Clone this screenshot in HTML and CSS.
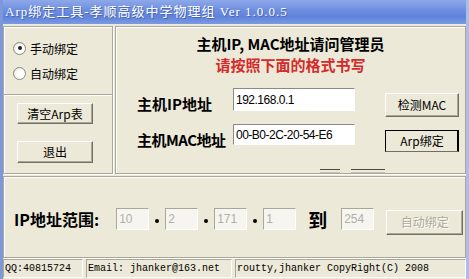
FILE: index.html
```html
<!DOCTYPE html>
<html lang="zh-CN">

<head>
    <meta charset="UTF-8">
    <title>Arp绑定工具</title>
    <link rel="stylesheet" href="styles.css">
</head>

<body>
    <div class="window">
        <div class="titlebar">Arp绑定工具-孝顺高级中学物理组 Ver 1.0.0.5</div>
        <div class="client">
            <div class="top">
                <div class="side">
                    <div class="radios">
                        <label class="radio"><span class="dot checked"></span>手动绑定</label>
                        <label class="radio"><span class="dot"></span>自动绑定</label>
                    </div>
                    <div class="side-buttons">
                        <button class="btn btn-side">清空Arp表</button>
                        <button class="btn btn-side btn-exit">退出</button>
                    </div>
                </div>
                <div class="main">
                    <div class="head">主机IP, MAC地址请问管理员</div>
                    <div class="hint">请按照下面的格式书写</div>
                    <div class="row row-ip">
                        <span class="label">主机IP地址</span>
                        <input class="field" type="text" value="192.168.0.1">
                        <button class="btn btn-act">检测MAC</button>
                    </div>
                    <div class="row row-mac">
                        <span class="label">主机MAC地址</span>
                        <input class="field field-mac" type="text" value="00-B0-2C-20-54-E6">
                        <button class="btn btn-act btn-focus">Arp绑定</button>
                    </div>
                    <!-- edges of controls cut off by the panel -->
                    <div class="clipped">
                        <span class="stub stub-a"></span>
                        <span class="stub stub-b"></span>
                    </div>
                </div>
            </div>
            <div class="range">
                <span class="label range-label">IP地址范围:</span>
                <input class="part" type="text" value="10" disabled>
                <span class="sep"></span>
                <input class="part" type="text" value="2" disabled>
                <span class="sep"></span>
                <input class="part" type="text" value="171" disabled>
                <span class="sep"></span>
                <input class="part" type="text" value="1" disabled>
                <span class="label to">到</span>
                <input class="part" type="text" value="254" disabled>
                <button class="btn btn-auto" disabled>自动绑定</button>
            </div>
        </div>
        <div class="statusbar">
            <div class="cell cell-qq">QQ:40815724</div>
            <div class="cell cell-mail">Email: jhanker@163.net</div>
            <div class="cell cell-copy">routty,jhanker CopyRight(C) 2008</div>
        </div>
    </div>
</body>

</html>
```

FILE: styles.css
```css
body {
    margin: 0;
    background-color: #ece9d8;
    font-family: "Noto Sans CJK SC", "Liberation Sans", sans-serif;
    font-size: 12px;
    color: #000;
}

.window {
    width: 469px;
    height: 279px;
    display: flex;
    flex-direction: column;
    box-sizing: border-box;
    border-left: 3px solid #7c97dc;
    border-right: 3px solid #aebde8;
    overflow: hidden;
}

.titlebar {
    height: 25px;
    margin: 0 -3px;
    padding-left: 5px;
    line-height: 24px;
    background: linear-gradient(#8ea8e8, #6b8de0 45%, #5f83da 70%, #7c9ae2);
    color: #fff;
    font-family: "Liberation Serif", "Noto Sans CJK SC", serif;
    font-size: 13px;
    text-shadow: 1px 1px 0 #4a64b0;
    letter-spacing: 1px;
    white-space: nowrap;
}

.client {
    flex: 1;
    display: flex;
    flex-direction: column;
    padding-top: 2px;
}

.top {
    display: flex;
    height: 148px;
}

/* etched frame, like a classic group box */
.side,
.main,
.range {
    box-sizing: border-box;
    border: 1px solid #aca899;
    box-shadow: inset 1px 1px #fff, 1px 1px #fff;
}

.side {
    width: 110px;
    display: flex;
    flex-direction: column;
}

.radios {
    height: 68px;
    box-sizing: border-box;
    padding: 14px 0 0 9px;
    border-bottom: 1px solid #aca899;
    box-shadow: 0 1px #fff;
    display: flex;
    flex-direction: column;
    gap: 11px;
}

.radio {
    display: flex;
    align-items: center;
    gap: 4px;
    height: 14px;
}

.dot {
    width: 11px;
    height: 11px;
    border-radius: 50%;
    border: 1px solid #8a8a80;
    background: radial-gradient(circle at 60% 60%, #fff 40%, #dcd8cc);
    display: flex;
    align-items: center;
    justify-content: center;
}

.dot.checked::after {
    content: "";
    width: 4px;
    height: 4px;
    border-radius: 50%;
    background-color: #222;
}

.side-buttons {
    display: flex;
    flex-direction: column;
    align-items: flex-start;
    padding: 8px 0 0 13px;
}

.btn {
    box-sizing: border-box;
    background-color: #ece9d8;
    border: 1px solid;
    border-color: #fff #716f64 #716f64 #fff;
    box-shadow: inset -1px -1px #aca899;
    font-family: "Noto Sans CJK SC", "Liberation Sans", sans-serif;
    font-size: 12px;
    color: #000;
    padding: 0;
    line-height: 1;
}

.btn-side {
    width: 76px;
    height: 21px;
}

.btn-exit {
    margin-top: 17px;
    height: 22px;
}

.main {
    flex: 1;
    margin-left: 2px;
    display: flex;
    flex-direction: column;
}

.head {
    margin-top: 8px;
    text-align: center;
    font-size: 15px;
    font-weight: bold;
    line-height: 18px;
}

.hint {
    margin-top: 3px;
    text-align: center;
    font-size: 15px;
    font-weight: bold;
    line-height: 18px;
    color: #d42a2a;
}

.row {
    display: flex;
    align-items: flex-start;
    padding-left: 21px;
}

.row-ip {
    margin-top: 14px;
}

.row-mac {
    margin-top: 7px;
}

.label {
    font-size: 16px;
    font-weight: bold;
    white-space: nowrap;
}

.row .label {
    width: 96px;
    margin-top: 5px;
    font-size: 15px;
}

.row-mac .label {
    letter-spacing: -0.5px;
}

.field {
    width: 122px;
    height: 23px;
    box-sizing: border-box;
    border: 1px solid;
    border-color: #8c8a80 #fff #fff #8c8a80;
    background-color: #fff;
    font-family: "Liberation Sans", sans-serif;
    font-size: 12px;
    padding: 0 2px;
    letter-spacing: -0.5px;
}

.field-mac {
    height: 21px;
}

.btn-act {
    width: 74px;
    height: 24px;
    margin-left: 30px;
    margin-top: 5px;
}

.btn-focus {
    height: 22px;
    margin-top: 6px;
    border-color: #000 #000 #716f64 #000;
    box-shadow: inset -1px 0 #000;
}

.clipped {
    margin-top: auto;
    margin-bottom: 0;
    display: flex;
    padding-left: 204px;
    gap: 11px;
}

.stub {
    height: 2px;
    border-top: 1px solid #4a4a44;
    border-bottom: 1px solid #c8c4b4;
}

.stub-a {
    width: 20px;
}

.stub-b {
    width: 34px;
}

.range {
    margin-top: 2px;
    height: 82px;
    display: flex;
    align-items: center;
    padding: 4px 0 0 10px;
}

.part {
    width: 33px;
    height: 22px;
    box-sizing: border-box;
    border: 1px solid;
    border-color: #aca899 #fff #fff #aca899;
    background-color: #f6f5f0;
    color: #b0b0a8;
    font-family: "Liberation Sans", sans-serif;
    font-size: 12px;
    padding: 0 2px;
}

.range-label {
    margin-right: 17px;
}

.sep {
    width: 4px;
    height: 4px;
    border-radius: 50%;
    background-color: #000;
    margin: 4px 6px 0;
}

.to {
    font-size: 19px;
    margin: 0 14px 0 12px;
}

.btn-auto {
    width: 77px;
    height: 25px;
    margin-left: 12px;
    margin-top: 6px;
    color: #aca899;
    text-shadow: 1px 1px #fff;
}

.statusbar {
    height: 22px;
    display: flex;
    align-items: center;
    gap: 3px;
    font-family: "Liberation Mono", monospace;
    font-size: 10px;
    padding-bottom: 1px;
}

.cell {
    box-sizing: border-box;
    height: 19px;
    line-height: 18px;
    border: 1px solid;
    border-color: #aca899 #fff #fff #aca899;
    padding-left: 1px;
    white-space: nowrap;
}

.cell-qq {
    width: 80px;
}

.cell-mail {
    width: 146px;
}

.cell-copy {
    flex: 1;
}
```
